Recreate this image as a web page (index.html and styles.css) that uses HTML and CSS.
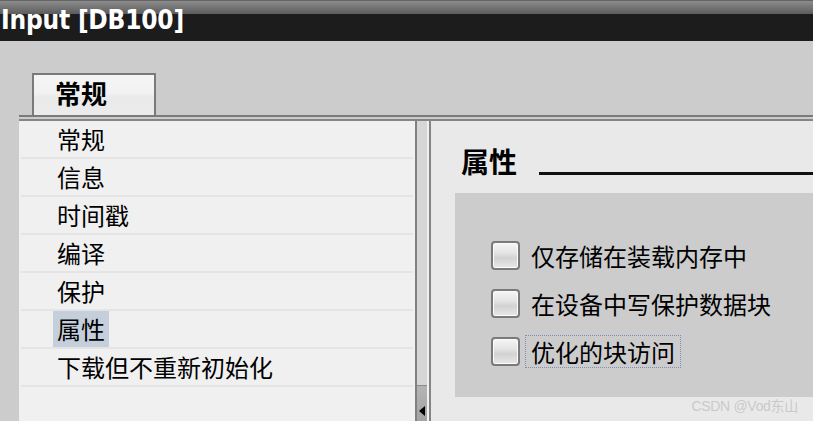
FILE: index.html
```html
<!DOCTYPE html>
<html lang="zh">
<head>
  <meta charset="UTF-8" />
  <title>Input [DB100]</title>
  <link rel="stylesheet" href="styles.css">
</head>
<body>

  <!-- Title bar -->
  <div class="titlebar">Input [DB100]</div>

  <!-- Tabs -->
  <div class="tabs">
    <div class="tab">常规</div>
  </div>
  <div class="tabline"></div>

  <div class="panel">
    <!-- Left navigation -->
    <div class="nav">
      <div class="nav-item"><span>常规</span></div>
      <div class="nav-item"><span>信息</span></div>
      <div class="nav-item"><span>时间戳</span></div>
      <div class="nav-item"><span>编译</span></div>
      <div class="nav-item"><span>保护</span></div>
      <div class="nav-item"><span class="selected">属性</span></div>
      <div class="nav-item"><span>下载但不重新初始化</span></div>
    </div>

    <!-- Scrollbar -->
    <div class="scroll">
      <div class="scroll-track"></div>
      <div class="scroll-btn"><span class="arrow"></span></div>
    </div>

    <!-- Properties -->
    <div class="main">
      <div class="heading">
        <h2>属性</h2>
        <span class="rule"></span>
      </div>
      <div class="group">
        <label class="option">
          <span class="check"></span>
          <span class="text">仅存储在装载内存中</span>
        </label>
        <label class="option">
          <span class="check"></span>
          <span class="text">在设备中写保护数据块</span>
        </label>
        <label class="option">
          <span class="check"></span>
          <span class="text focus">优化的块访问</span>
        </label>
      </div>
      <div class="watermark">CSDN @Vod东山</div>
    </div>
  </div>

</body>
</html>
```

FILE: styles.css
```css
:root {
  --cjk: "Noto Sans CJK SC", "Noto Sans", sans-serif;
  --border: #7a7a7a;
}

* {
  box-sizing: border-box;
  margin: 0;
  padding: 0;
}

html, body {
  width: 813px;
  height: 421px;
  overflow: hidden;
}

body {
  background-color: #cccccc;
  font-family: var(--cjk);
  color: #000;
}

/* Title bar */
.titlebar {
  height: 41px;
  line-height: 41px;
  padding-left: 1px;
  color: #fff;
  font-family: "DejaVu Sans Condensed", "DejaVu Sans", sans-serif;
  font-stretch: condensed;
  font-weight: bold;
  font-size: 26px;
  letter-spacing: -0.2px;
  white-space: nowrap;
  background: linear-gradient(#3a3a3a 0, #8c8c8c 1px, #5c5c5c 14px, #1c1c1c 14px, #1c1c1c 100%);
}

/* Tabs */
.tabs {
  padding: 32px 0 0 32px;
  height: 74px;
  display: flex;
  align-items: flex-end;
}

.tab {
  width: 124px;
  height: 42px;
  border: 2px solid var(--border);
  border-bottom: none;
  background: linear-gradient(#f5f5f5, #f2f2f2 45%, #eaeaea 55%, #ebebeb);
  font-size: 26px;
  font-weight: bold;
  line-height: 36px;
  padding-left: 21px;
}

.tabline {
  margin-left: 19px;
  height: 2px;
  background-color: var(--border);
}

/* Panel below the tabs */
.panel {
  margin: 2px 0 0 19px;
  height: 302px;
  border-top: 2px solid #858585;
  display: flex;
}

.nav {
  width: 396px;
  background-color: #f0f0f0;
}

.nav-item {
  height: 38px;
  margin: 0 2px;
  border-bottom: 2px solid #e4e4e4;
  padding-left: 32px;
  font-size: 24px;
  line-height: 36px;
}

.nav-item span {
  display: inline-block;
  height: 36px;
  padding: 0 4px;
}

.nav-item .selected {
  background-color: #c4cfdb;
}

.scroll {
  width: 16px;
  border-left: 2px solid #808080;
  border-right: 2px solid #858585;
  background-color: #d6d6d6;
  box-shadow: inset -2px 0 0 #f0f0f0;
  display: flex;
  flex-direction: column;
}

.scroll-track {
  flex: 1;
}

.scroll-btn {
  height: 36px;
  margin-right: 2px;
  border-top: 1px solid #8a8a8a;
  background: linear-gradient(#b4b4b4, #a3a3a3);
  padding: 20px 0 0 2px;
}

.arrow {
  display: block;
  width: 0;
  height: 0;
  border-top: 5px solid transparent;
  border-bottom: 5px solid transparent;
  border-right: 6px solid #000;
}

/* Properties area */
.main {
  flex: 1;
  position: relative;
  background-color: #e9e9e9;
  padding: 26px 0 0 24px;
}

.heading {
  display: flex;
  align-items: flex-end;
  padding-left: 6px;
}

.heading h2 {
  font-size: 28px;
  font-weight: bold;
  line-height: 28px;
}

.rule {
  flex: 1;
  height: 3px;
  margin-left: 22px;
  background-color: #111;
}

.group {
  margin-top: 18px;
  height: 204px;
  background-color: #cccccc;
  padding: 38px 0 0 36px;
}

.option {
  display: flex;
  align-items: center;
  height: 48px;
  font-size: 24px;
}

.check {
  width: 29px;
  height: 29px;
  border: 2px solid #7a7a7a;
  border-radius: 4px;
  box-shadow: inset 0 0 0 1px #fbfbfb;
  background: linear-gradient(#f6f6f6, #e4e4e4 40%, #d2d2d2 60%, #e8e8e8);
}

.text {
  margin-left: 6px;
  padding: 0 5px;
  height: 31px;
  line-height: 31px;
}

.text.focus {
  outline: 1px dotted #7d8db5;
}

.watermark {
  position: absolute;
  right: 15px;
  bottom: 6px;
  font-family: "Liberation Sans", var(--cjk);
  font-size: 14px;
  letter-spacing: -0.3px;
  color: #c9c9c9;
}
```
